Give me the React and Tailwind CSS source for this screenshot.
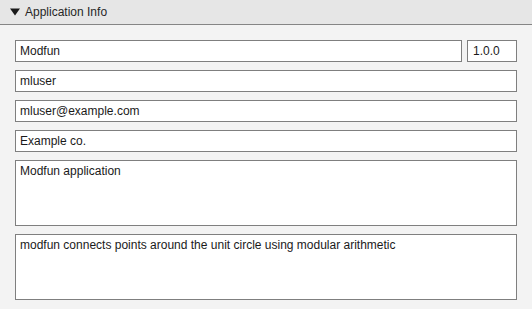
export default function App() {
  const field = "h-[22px] bg-white border border-[#7f7f7f] pl-[4px] flex items-center text-[12px] text-[#1a1a1a] leading-[14px]";
  const area = "h-[66px] bg-white border border-[#7f7f7f] pl-[4px] pt-[3px] text-[12px] text-[#1a1a1a] leading-[14px]";
  return (
    <div className="w-[532px] h-[309px] bg-[#f3f3f3] overflow-hidden" style={{ fontFamily: '"Liberation Sans", Arial, sans-serif' }}>
      <div className="h-[25px] bg-[#e6e6e6] border-b border-[#858585] flex items-center pl-[10px] text-[12px] text-[#262626]">
        <svg width="10" height="8" viewBox="0 0 10 8" className="mr-[5px]">
          <polygon points="0,0.5 10,0.5 5,7.5" fill="#1a1a1a" />
        </svg>
        <span>Application Info</span>
      </div>
      <div className="px-[15px] pt-[15px] flex flex-col gap-[8px]">
        <div className="flex gap-[5px]">
          <div className={field + " flex-1"}>Modfun</div>
          <div className={field + " w-[50px] pl-[5px]"}>1.0.0</div>
        </div>
        <div className={field}>mluser</div>
        <div className={field}>mluser@example.com</div>
        <div className={field}>Example co.</div>
        <div className={area}>Modfun application</div>
        <div className={area}>modfun connects points around the unit circle using modular arithmetic</div>
      </div>
    </div>
  );
}
